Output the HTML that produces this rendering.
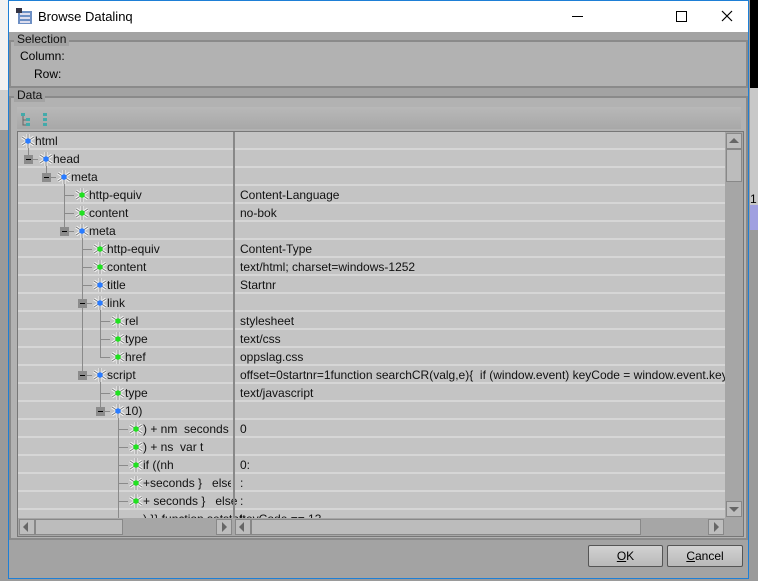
<!DOCTYPE html>
<html><head><style>
body{margin:0;width:758px;height:581px;overflow:hidden;background:#9a9a9a;font-family:"Liberation Sans",sans-serif;font-size:12px;color:#000;position:relative}
.a{position:absolute}
.win{left:8px;top:0;width:741px;height:579px;background:#a3a3a3;border:1px solid #1e7fd6;box-sizing:border-box}
.tb{left:0;top:0;width:739px;height:31px;background:#fff}
.grp{border:2px solid #8a8a8a;background:#b2b2b2;box-sizing:border-box}
.lg{background:#a3a3a3;padding:0 3px;font-size:12px;color:#111}
.row{position:absolute;left:0;height:18px;width:707px;border-bottom:2px solid #d6d6d6;box-sizing:border-box}
.t{position:absolute;top:2px;white-space:pre;color:#111}
.vl{position:absolute;width:1px;background:#8a8a8a}
.hl{position:absolute;height:1px;top:9px;background:#8a8a8a}
.ex{position:absolute;width:9px;height:9px;top:5px;background:#8c8c8c;}
.ex:after{content:"";position:absolute;left:2px;top:4px;width:5px;height:1px;background:#000}
.ic{position:absolute;top:1px}
.btn{position:absolute;height:22px;border:1px solid #555;background:linear-gradient(#d2d2d2,#b9b9b9);box-sizing:border-box;text-align:center;line-height:20px;border-radius:2px}
</style></head><body>
<div class="a" style="left:0;top:0;width:8px;height:90px;background:#f2f2f2"></div>
<div class="a" style="left:0;top:90px;width:8px;height:40px;background:#cfcfcf"></div>
<div class="a" style="left:750px;top:0;width:8px;height:88px;background:#000"></div>
<div class="a" style="left:750px;top:88px;width:8px;height:120px;background:#c8c8c8"></div>
<div class="a" style="left:750px;top:205px;width:8px;height:25px;background:#a0a0e0"></div>
<div class="a" style="left:750px;top:192px;font-size:12px">1</div>
<div class="a win">
 <div class="a tb">
  <svg class="a" style="left:7px;top:7px" width="18" height="17"><rect x="2" y="3" width="14" height="13" fill="#6d8fc4"/><rect x="4" y="5" width="10" height="2" fill="#dde"/><rect x="4" y="9" width="10" height="2" fill="#dde"/><rect x="4" y="13" width="10" height="2" fill="#dde"/><rect x="0" y="0" width="6" height="5" fill="#334"/></svg>
  <div class="a" style="left:29px;top:8px;font-size:13px;color:#000">Browse Datalinq</div>
  <div class="a" style="left:563px;top:15px;width:11px;height:1px;background:#000"></div>
  <div class="a" style="left:667px;top:10px;width:9px;height:9px;border:1px solid #000"></div>
  <svg class="a" style="left:712px;top:9px" width="12" height="12"><path d="M1 1L11 11M11 1L1 11" stroke="#000" stroke-width="1.2"/></svg>
 </div>
 <div class="a grp" style="left:0;top:39px;width:739px;height:48px"></div>
 <div class="a lg" style="left:5px;top:31px">Selection</div>
 <div class="a" style="left:11px;top:48px">Column:</div>
 <div class="a" style="left:25px;top:66px">Row:</div>
 <div class="a grp" style="left:0;top:95px;width:739px;height:444px"></div>
 <div class="a lg" style="left:5px;top:87px">Data</div>
 <div class="a" style="left:8px;top:106px;width:724px;height:22px;background:linear-gradient(#b8b8b8,#a8a8a8)"></div>
 <svg class="a" style="left:12px;top:111px" width="10" height="16"><rect x="0" y="1" width="4" height="3" fill="#4aa"/><rect x="5" y="6" width="4" height="3" fill="#4aa"/><rect x="5" y="11" width="4" height="3" fill="#4aa"/><path d="M2 4V13H5M2 8H5" stroke="#666" fill="none"/></svg>
 <svg class="a" style="left:34px;top:111px" width="6" height="16"><rect x="0" y="1" width="4" height="3" fill="#4aa"/><rect x="0" y="6" width="4" height="3" fill="#4aa"/><rect x="0" y="11" width="4" height="3" fill="#4aa"/></svg>
 <div class="a" style="left:8px;top:130px;width:725px;height:404px;border:1px solid #777;background:#c4c4c4;overflow:hidden">
  <div id="rows" class="a" style="left:0;top:0;width:707px;height:386px;overflow:hidden">
   <svg width="0" height="0" style="position:absolute"><defs>
    <symbol id="ib" viewBox="0 0 16 16"><path d="M8 1V15M2 4L14 12M14 4L2 12" stroke="#f6f6f6" stroke-width="3"/><path d="M8 1V15M2 4L14 12M14 4L2 12" stroke="#7a7a7a" stroke-width="1"/><circle cx="8" cy="8" r="2.8" fill="#2a7cff"/></symbol>
    <symbol id="ig" viewBox="0 0 16 16"><path d="M8 1V15M2 4L14 12M14 4L2 12" stroke="#f6f6f6" stroke-width="3"/><path d="M8 1V15M2 4L14 12M14 4L2 12" stroke="#7a7a7a" stroke-width="1"/><circle cx="8" cy="8" r="2.8" fill="#22e022"/></symbol>
   </defs></svg>
   <div class="row" style="top:0"><svg class="ic" style="left:2px" width="16" height="16"><use href="#ib"/></svg><span class="t" style="left:17px">html</span></div>
   <div class="row" style="top:18px"><div class="hl" style="left:10px;width:10px"></div><div class="ex" style="left:6px"></div><svg class="ic" style="left:20px" width="16" height="16"><use href="#ib"/></svg><span class="t" style="left:35px">head</span></div>
   <div class="row" style="top:36px"><div class="hl" style="left:28px;width:10px"></div><div class="ex" style="left:24px"></div><svg class="ic" style="left:38px" width="16" height="16"><use href="#ib"/></svg><span class="t" style="left:53px">meta</span></div>
   <div class="row" style="top:54px"><div class="hl" style="left:46px;width:10px"></div><svg class="ic" style="left:56px" width="16" height="16"><use href="#ig"/></svg><span class="t" style="left:71px">http-equiv</span><span class="t" style="left:222px">Content-Language</span></div>
   <div class="row" style="top:72px"><div class="hl" style="left:46px;width:10px"></div><svg class="ic" style="left:56px" width="16" height="16"><use href="#ig"/></svg><span class="t" style="left:71px">content</span><span class="t" style="left:222px">no-bok</span></div>
   <div class="row" style="top:90px"><div class="hl" style="left:46px;width:10px"></div><div class="ex" style="left:42px"></div><svg class="ic" style="left:56px" width="16" height="16"><use href="#ib"/></svg><span class="t" style="left:71px">meta</span></div>
   <div class="row" style="top:108px"><div class="hl" style="left:64px;width:10px"></div><svg class="ic" style="left:74px" width="16" height="16"><use href="#ig"/></svg><span class="t" style="left:89px">http-equiv</span><span class="t" style="left:222px">Content-Type</span></div>
   <div class="row" style="top:126px"><div class="hl" style="left:64px;width:10px"></div><svg class="ic" style="left:74px" width="16" height="16"><use href="#ig"/></svg><span class="t" style="left:89px">content</span><span class="t" style="left:222px">text/html; charset=windows-1252</span></div>
   <div class="row" style="top:144px"><div class="hl" style="left:64px;width:10px"></div><svg class="ic" style="left:74px" width="16" height="16"><use href="#ib"/></svg><span class="t" style="left:89px">title</span><span class="t" style="left:222px">Startnr</span></div>
   <div class="row" style="top:162px"><div class="hl" style="left:64px;width:10px"></div><div class="ex" style="left:60px"></div><svg class="ic" style="left:74px" width="16" height="16"><use href="#ib"/></svg><span class="t" style="left:89px">link</span></div>
   <div class="row" style="top:180px"><div class="hl" style="left:82px;width:10px"></div><svg class="ic" style="left:92px" width="16" height="16"><use href="#ig"/></svg><span class="t" style="left:107px">rel</span><span class="t" style="left:222px">stylesheet</span></div>
   <div class="row" style="top:198px"><div class="hl" style="left:82px;width:10px"></div><svg class="ic" style="left:92px" width="16" height="16"><use href="#ig"/></svg><span class="t" style="left:107px">type</span><span class="t" style="left:222px">text/css</span></div>
   <div class="row" style="top:216px"><div class="hl" style="left:82px;width:10px"></div><svg class="ic" style="left:92px" width="16" height="16"><use href="#ig"/></svg><span class="t" style="left:107px">href</span><span class="t" style="left:222px">oppslag.css</span></div>
   <div class="row" style="top:234px"><div class="hl" style="left:64px;width:10px"></div><div class="ex" style="left:60px"></div><svg class="ic" style="left:74px" width="16" height="16"><use href="#ib"/></svg><span class="t" style="left:89px">script</span><span class="t" style="left:222px">offset=0startnr=1function searchCR(valg,e){  if (window.event) keyCode = window.event.keyCode</span></div>
   <div class="row" style="top:252px"><div class="hl" style="left:82px;width:10px"></div><svg class="ic" style="left:92px" width="16" height="16"><use href="#ig"/></svg><span class="t" style="left:107px">type</span><span class="t" style="left:222px">text/javascript</span></div>
   <div class="row" style="top:270px"><div class="hl" style="left:82px;width:10px"></div><div class="ex" style="left:78px"></div><svg class="ic" style="left:92px" width="16" height="16"><use href="#ib"/></svg><span class="t" style="left:107px">10)</span></div>
   <div class="row" style="top:288px"><div class="hl" style="left:100px;width:10px"></div><svg class="ic" style="left:110px" width="16" height="16"><use href="#ig"/></svg><span class="t" style="left:125px">) + nm  seconds</span><span class="t" style="left:222px">0</span></div>
   <div class="row" style="top:306px"><div class="hl" style="left:100px;width:10px"></div><svg class="ic" style="left:110px" width="16" height="16"><use href="#ig"/></svg><span class="t" style="left:125px">) + ns  var t</span></div>
   <div class="row" style="top:324px"><div class="hl" style="left:100px;width:10px"></div><svg class="ic" style="left:110px" width="16" height="16"><use href="#ig"/></svg><span class="t" style="left:125px">if ((nh</span><span class="t" style="left:222px">0:</span></div>
   <div class="row" style="top:342px"><div class="hl" style="left:100px;width:10px"></div><svg class="ic" style="left:110px" width="16" height="16"><use href="#ig"/></svg><span class="t" style="left:125px;width:88px;overflow:hidden">+seconds }   else if</span><span class="t" style="left:222px">:</span></div>
   <div class="row" style="top:360px"><div class="hl" style="left:100px;width:10px"></div><svg class="ic" style="left:110px" width="16" height="16"><use href="#ig"/></svg><span class="t" style="left:125px">+ seconds }   else</span><span class="t" style="left:222px">:</span></div>
   <div class="row" style="top:378px"><div class="hl" style="left:100px;width:10px"></div><span class="t" style="left:125px">) }} function setstatt</span><span class="t" style="left:222px">keyCode == 13</span></div>
   <!-- vertical tree lines -->
   <div class="vl" style="left:10px;top:16px;height:11px"></div>
   <div class="vl" style="left:28px;top:34px;height:11px"></div>
   <div class="vl" style="left:46px;top:52px;height:47px"></div>
   <div class="vl" style="left:64px;top:106px;height:137px"></div>
   <div class="vl" style="left:82px;top:178px;height:47px"></div>
   <div class="vl" style="left:82px;top:250px;height:29px"></div>
   <div class="vl" style="left:100px;top:286px;height:120px"></div>
   <div class="ex" style="left:6px;top:23px"></div>
   <div class="ex" style="left:24px;top:41px"></div>
   <div class="ex" style="left:42px;top:95px"></div>
   <div class="ex" style="left:60px;top:167px"></div>
   <div class="ex" style="left:60px;top:239px"></div>
   <div class="ex" style="left:78px;top:275px"></div>
   <div class="a" style="left:215px;top:0;width:2px;height:404px;background:#888"></div>
  </div>
  <!-- vertical scrollbar -->
  <div class="a" style="left:707px;top:0;width:18px;height:386px;background:#a6a6a6"></div>
  <div class="a" style="left:708px;top:1px;width:16px;height:16px;border:1px solid #888;box-sizing:border-box;background:#bdbdbd"></div>
  <div class="a" style="left:711px;top:6px;width:0;height:0;border-left:5px solid transparent;border-right:5px solid transparent;border-bottom:5px solid #666"></div>
  <div class="a" style="left:708px;top:17px;width:16px;height:33px;border:1px solid #888;box-sizing:border-box;background:#bcbcbc"></div>
  <div class="a" style="left:708px;top:369px;width:16px;height:16px;border:1px solid #888;box-sizing:border-box;background:#bdbdbd"></div>
  <div class="a" style="left:711px;top:375px;width:0;height:0;border-left:5px solid transparent;border-right:5px solid transparent;border-top:5px solid #666"></div>
  <!-- horizontal scrollbars -->
  <div class="a" style="left:0;top:386px;width:725px;height:18px;background:#a6a6a6"></div>
  <div class="a" style="left:1px;top:387px;width:16px;height:16px;border:1px solid #888;box-sizing:border-box;background:#bdbdbd"></div>
  <div class="a" style="left:5px;top:390px;border-top:5px solid transparent;border-bottom:5px solid transparent;border-right:5px solid #666"></div>
  <div class="a" style="left:17px;top:387px;width:88px;height:16px;border:1px solid #888;box-sizing:border-box;background:#bcbcbc"></div>
  <div class="a" style="left:198px;top:387px;width:16px;height:16px;border:1px solid #888;box-sizing:border-box;background:#bdbdbd"></div>
  <div class="a" style="left:204px;top:390px;border-top:5px solid transparent;border-bottom:5px solid transparent;border-left:5px solid #666"></div>
  <div class="a" style="left:217px;top:387px;width:16px;height:16px;border:1px solid #888;box-sizing:border-box;background:#bdbdbd"></div>
  <div class="a" style="left:221px;top:390px;border-top:5px solid transparent;border-bottom:5px solid transparent;border-right:5px solid #666"></div>
  <div class="a" style="left:233px;top:387px;width:390px;height:16px;border:1px solid #888;box-sizing:border-box;background:#bcbcbc"></div>
  <div class="a" style="left:690px;top:387px;width:16px;height:16px;border:1px solid #888;box-sizing:border-box;background:#bdbdbd"></div>
  <div class="a" style="left:696px;top:390px;border-top:5px solid transparent;border-bottom:5px solid transparent;border-left:5px solid #666"></div>
 </div>
 <div class="btn" style="left:579px;top:544px;width:75px"><u>O</u>K</div>
 <div class="btn" style="left:658px;top:544px;width:76px"><u>C</u>ancel</div>
</div>
</body></html>
